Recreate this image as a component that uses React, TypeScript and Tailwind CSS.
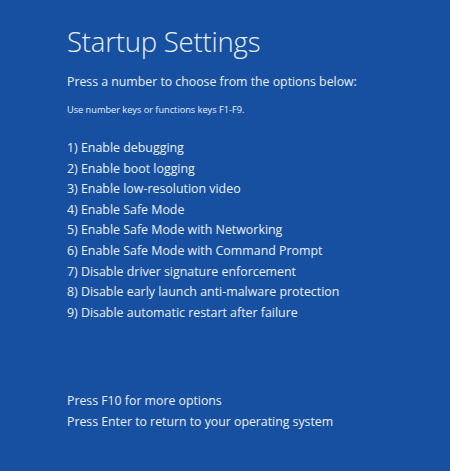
const options = [
  "1) Enable debugging",
  "2) Enable boot logging",
  "3) Enable low-resolution video",
  "4) Enable Safe Mode",
  "5) Enable Safe Mode with Networking",
  "6) Enable Safe Mode with Command Prompt",
  "7) Disable driver signature enforcement",
  "8) Disable early launch anti-malware protection",
  "9) Disable automatic restart after failure",
];

export default function App() {
  return (
    <div
      className="w-[450px] h-[471px] bg-[#1750a0] text-[#e9f0fa] overflow-hidden"
      style={{ fontFamily: '"Open Sans", "Noto Sans", sans-serif' }}
    >
      <div className="pl-[67px] pt-[25px] flex flex-col">
        <h1 className="text-[27.5px] leading-[34px] font-light tracking-[-0.2px]">Startup Settings</h1>
        <p className="mt-[14px] text-[12.3px] leading-[18px]">Press a number to choose from the options below:</p>
        <p className="mt-[13px] text-[9.2px] leading-[12px]">Use number keys or functions keys F1-F9.</p>
        <ul className="mt-[22px] flex flex-col">
          {options.map((o) => (
            <li key={o} className="text-[12.4px] leading-[20.6px]">{o}</li>
          ))}
        </ul>
        <div className="mt-[68px] flex flex-col">
          <p className="text-[12.3px] leading-[20.5px]">Press F10 for more options</p>
          <p className="text-[12.3px] leading-[20.5px]">Press Enter to return to your operating system</p>
        </div>
      </div>
    </div>
  );
}
